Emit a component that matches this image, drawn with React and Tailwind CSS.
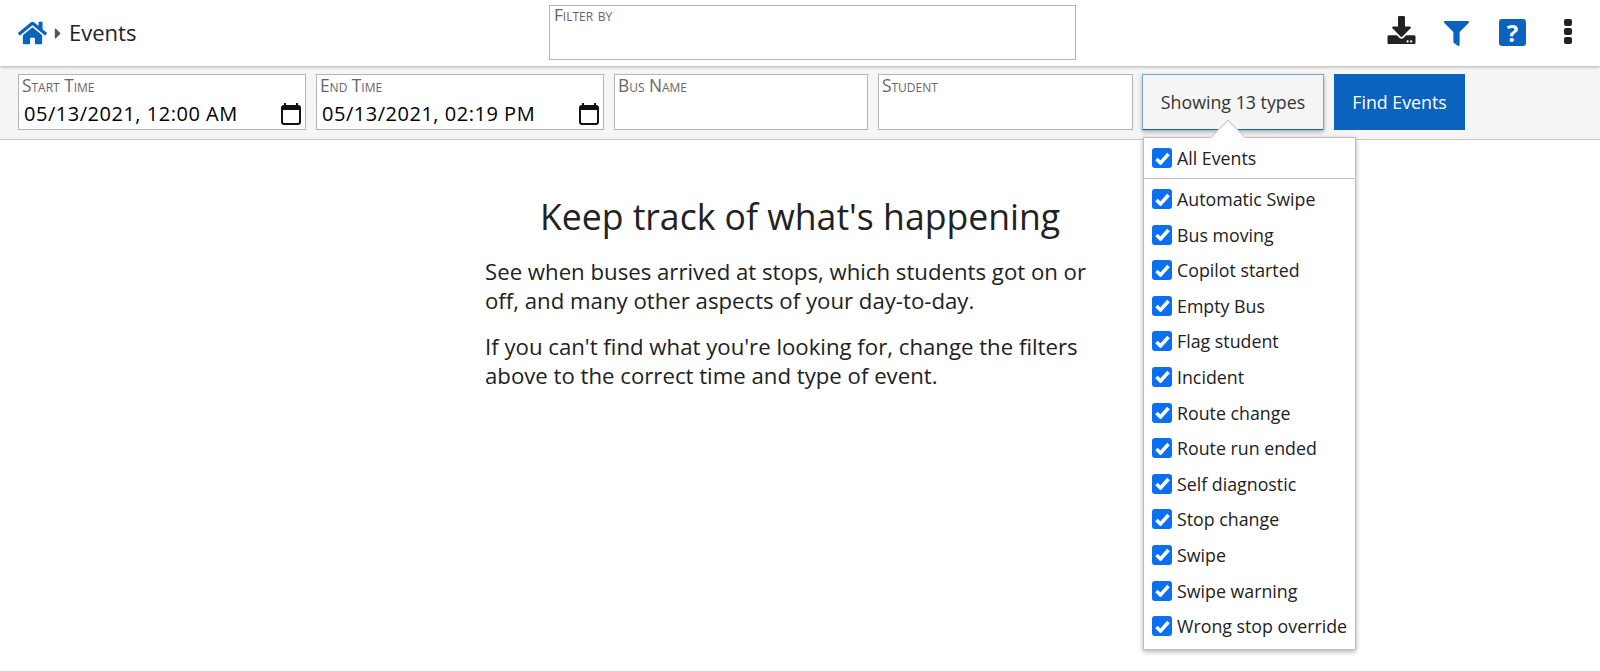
import React from "react";
import { FaHome, FaCaretRight, FaDownload, FaFilter } from "react-icons/fa";

const FONT = { fontFamily: '"Open Sans", sans-serif' };

const EVENT_TYPES = [
  "Automatic Swipe",
  "Bus moving",
  "Copilot started",
  "Empty Bus",
  "Flag student",
  "Incident",
  "Route change",
  "Route run ended",
  "Self diagnostic",
  "Stop change",
  "Swipe",
  "Swipe warning",
  "Wrong stop override",
];

function CalendarIcon() {
  return (
    <svg width="22" height="24" viewBox="0 0 22 24" fill="none" className="shrink-0">
      <path d="M5 1v4M17 1v4" stroke="#111" strokeWidth="2" />
      <rect x="2" y="4" width="18" height="18" rx="2" stroke="#111" strokeWidth="2" />
      <rect x="2" y="4" width="18" height="4" fill="#111" />
    </svg>
  );
}

function Kebab() {
  return (
    <div className="flex flex-col gap-[2px]">
      <div className="w-[8px] h-[7px] rounded-[2px] bg-[#222]" />
      <div className="w-[8px] h-[7px] rounded-[2px] bg-[#222]" />
      <div className="w-[8px] h-[7px] rounded-[2px] bg-[#222]" />
    </div>
  );
}

function Field({ label, value, className }) {
  return (
    <div className={`h-[56px] border border-[#b5b5b5] bg-white pl-[3px] pr-[3px] flex flex-col ${className}`}>
      <div className="text-[17.3px] leading-[20px] text-[#666] [font-variant:small-caps] mt-[1px]">{label}</div>
      {value && (
        <div className="flex items-center justify-between pl-[2px] mt-[3px]">
          <span className="text-[20px] leading-[30px] text-black tracking-[0.52px]">{value}</span>
          <CalendarIcon />
        </div>
      )}
    </div>
  );
}

function CheckRow({ label, className }) {
  return (
    <div className={`flex items-center gap-[5px] ${className}`}>
      <div className="w-[20px] h-[20px] rounded-[3px] bg-[#0b6ff2] flex items-center justify-center shrink-0">
        <svg width="15" height="13" viewBox="0 0 15 13" fill="none">
          <path d="M1.5 7L5.5 11L13.5 2" stroke="#fff" strokeWidth="3.5" />
        </svg>
      </div>
      <span className="text-[17.8px] leading-[20px] text-[#222]">{label}</span>
    </div>
  );
}

function TypeDropdown() {
  return (
    <div className="absolute left-[1143px] top-[137px] w-[213px] h-[513px] bg-white border border-[#bdbdbd] shadow-[0_2px_5px_rgba(0,0,0,0.3)] z-20">
      <div className="absolute left-[71px] top-[-13px] w-[26px] h-[26px] rotate-45 bg-white border-t border-l border-[#c4c4c4]" />
      <div className="relative h-[41px] border-b border-[#bdbdbd] pl-[8px] pt-[10px] bg-white">
        <CheckRow label="All Events" />
      </div>
      <div className="pl-[8px] pt-[10px] flex flex-col gap-[15.6px]">
        {EVENT_TYPES.map((t) => (
          <CheckRow key={t} label={t} />
        ))}
      </div>
    </div>
  );
}

export default function App() {
  return (
    <div style={FONT} className="relative w-[1600px] h-[671px] bg-white overflow-hidden">
      {/* Header */}
      <header className="relative z-10 h-[66px] bg-white shadow-[0_1px_3px_rgba(0,0,0,0.3)] flex items-center pl-[18px] pr-[28px]">
        <div className="w-[531px] flex items-center">
          <FaHome className="text-[#0a63bd] w-[29px] h-[26px]" />
          <FaCaretRight className="text-[#555] w-[12px] h-[17px] ml-[5px]" />
          <span className="text-[22px] leading-[30px] text-[#222] ml-[5px] mb-[2px]">Events</span>
        </div>
        <div className="w-[527px] h-[55px] border border-[#b5b5b5] px-[4px] self-start mt-[5px]">
          <div className="text-[17.2px] leading-[18px] text-[#666] [font-variant:small-caps]">Filter by</div>
        </div>
        <div className="ml-auto flex items-center">
          <FaDownload className="text-[#222] w-[29px] h-[28px] mb-[6px]" />
          <FaFilter className="text-[#0a63bd] w-[25px] h-[25px] ml-[28px]" />
          <div className="w-[27px] h-[27px] rounded-[3px] bg-[#0a63bd] text-white font-bold text-[24px] leading-[27px] text-center ml-[30px] mb-[2px]">?</div>
          <div className="ml-[38px] mb-[4px]"><Kebab /></div>
        </div>
      </header>

      {/* Filter bar */}
      <div className="h-[74px] bg-[#f5f5f5] border-b border-[#c8c8c8] flex items-start pt-[8px] pl-[18px] gap-[10px]">
        <Field label="Start Time" value="05/13/2021, 12:00 AM" className="w-[288px]" />
        <Field label="End Time" value="05/13/2021, 02:19 PM" className="w-[288px]" />
        <Field label="Bus Name" className="w-[254px]" />
        <Field label="Student" className="w-[255px]" />
        <button className="w-[182px] h-[56px] -ml-[1px] bg-[#f5f5f5] border border-[#7ba4d4] border-b-[#0a63bd] text-[17.8px] text-[#333] shadow-[0_2px_4px_rgba(0,0,0,0.3)]">
          Showing 13 types
        </button>
        <button className="w-[131px] h-[56px] bg-[#0a63bd] text-white text-[17.8px] font-medium">
          Find Events
        </button>
      </div>

      <TypeDropdown />

      {/* Empty state */}
      <main className="w-[630px] ml-[485px] text-[#222]">
        <h1 className="text-[35.6px] leading-[48px] text-center mt-[52px] mb-[17px]">Keep track of what's happening</h1>
        <p className="text-[22.2px] leading-[29px] mb-[17px]">
          See when buses arrived at stops, which students got on or off, and many other aspects of your day-to-day.
        </p>
        <p className="text-[22.2px] leading-[29px]">
          If you can't find what you're looking for, change the filters above to the correct time and type of event.
        </p>
      </main>
    </div>
  );
}
